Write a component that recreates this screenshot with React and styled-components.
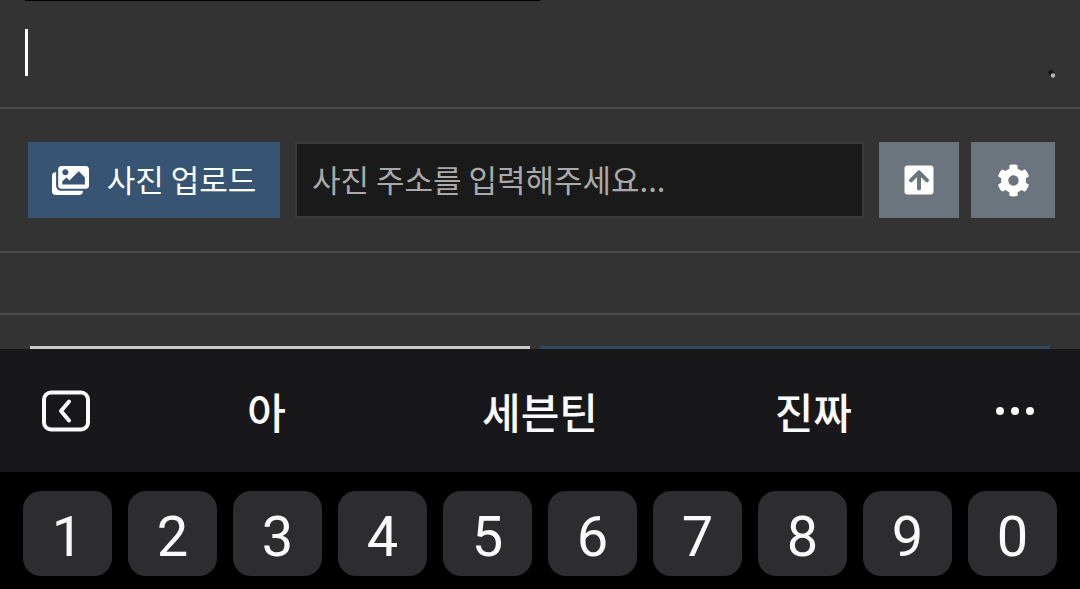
import styled, { createGlobalStyle } from 'styled-components';
import { useState } from 'react';
import { FaImages, FaCog } from 'react-icons/fa';

const suggestions = ['아', '세븐틴', '진짜'];
const digits = ['1', '2', '3', '4', '5', '6', '7', '8', '9', '0'];

function App() {
    const [content, setContent] = useState('');
    const [address, setAddress] = useState('');

    const typeDigit = (digit) => () => {
        setContent(content + digit);
    };

    return (<>
        <GlobalStyle />
        <Page>
            <Editor>
                <EditorEdge />
                <EditorText
                    aria-label="본문"
                    value={content}
                    onChange={(e) => setContent(e.target.value)}
                />
                {content === '' && <Caret />}
                <ResizeGrip viewBox="0 0 8 8" aria-hidden="true">
                    <circle cx="3" cy="2.6" r="2.5" fill="#141414" />
                    <circle cx="5" cy="5.5" r="2.2" fill="#b4b4b4" />
                </ResizeGrip>
            </Editor>

            <Toolbar>
                <UploadButton type="button">
                    <FaImages />
                    <span>사진 업로드</span>
                </UploadButton>
                <AddressInput
                    type="text"
                    aria-label="사진 주소"
                    placeholder="사진 주소를 입력해주세요..."
                    value={address}
                    onChange={(e) => setAddress(e.target.value)}
                />
                <IconButtons>
                    <IconButton type="button" $width={80} aria-label="올리기">
                        <svg width="30" height="30" viewBox="0 0 30 30" fill="none">
                            <rect x="0.5" y="0.5" width="29" height="29" rx="3" fill="#fff" />
                            <path d="M15 23.6V8M7 15.4L15 7.4L23 15.4" stroke="#6c757d" strokeWidth="4" strokeLinecap="round" strokeLinejoin="round" />
                        </svg>
                    </IconButton>
                    <IconButton type="button" $width={84} aria-label="설정">
                        <FaCog />
                    </IconButton>
                </IconButtons>
            </Toolbar>

            <Spacer />

            <Actions>
                <ActionCell $left={30} $right={10}>
                    <ActionButton type="button" $color="#c9c9c9" aria-label="취소" />
                </ActionCell>
                <ActionCell $left={0} $right={30}>
                    <ActionButton type="button" $color="#34495e" aria-label="등록" />
                </ActionCell>
            </Actions>

            <Keyboard>
                <SuggestionBar>
                    <SuggestionButton type="button" aria-label="접기">
                        <svg width="50" height="42" viewBox="0 0 50 42" fill="none" stroke="#fafafc" strokeLinecap="round" strokeLinejoin="round">
                            <rect x="4" y="2.5" width="44" height="37" rx="7" strokeWidth="4" />
                            <path d="M29 11.5L21 21L29 30.5" strokeWidth="4" />
                        </svg>
                    </SuggestionButton>
                    {suggestions.map((word) => (
                        <SuggestionButton type="button" key={word}>{word}</SuggestionButton>
                    ))}
                    <SuggestionButton type="button" aria-label="더보기">
                        <svg width="40" height="8" viewBox="0 0 40 8" fill="#fafafc">
                            <circle cx="5" cy="4" r="4" />
                            <circle cx="20" cy="4" r="4" />
                            <circle cx="35" cy="4" r="4" />
                        </svg>
                    </SuggestionButton>
                </SuggestionBar>
                <KeyRow>
                    {digits.map((digit) => (
                        <Key type="button" key={digit} onClick={typeDigit(digit)}>{digit}</Key>
                    ))}
                </KeyRow>
            </Keyboard>
        </Page>
    </>)
}

const GlobalStyle = createGlobalStyle`
* {
    box-sizing: border-box;
}

body {
    margin: 0;
    background: #333333;
}
`;

const Page = styled.div`
    display: flex;
    flex-direction: column;

    height: 100vh;
    overflow: hidden;

    background: #333333;

    button, input, textarea {
        margin: 0;
        outline: none;
    }
`;

const Editor = styled.div`
    position: relative;
    flex: none;

    padding: 0 25px;

    border-bottom: 2px solid #4b4b4b;
`;

const EditorEdge = styled.div`
    width: 50%;
    height: 1px;

    background: #000000;
`;

const EditorText = styled.textarea`
    display: block;

    width: 100%;
    height: 106px;
    padding: 28px 0 0;
    border: none;

    background: transparent;
    color: white;
    resize: none;

    font-family: "Noto Sans CJK KR", sans-serif;
    font-size: 31px;
    line-height: 48px;
`;

const Caret = styled.span`
    position: absolute;
    top: 29px;
    left: 25px;

    width: 3px;
    height: 47px;

    background: white;
    pointer-events: none;
`;

const ResizeGrip = styled.svg`
    position: absolute;
    right: 24px;
    bottom: 29px;

    width: 8px;
    height: 8px;
`;

const Toolbar = styled.div`
    display: flex;
    flex: none;
    gap: 15px;

    padding: 33px 25px 33px 28px;

    border-bottom: 2px solid #4b4b4b;
`;

const UploadButton = styled.button`
    display: flex;
    align-items: center;
    justify-content: center;
    gap: 18px;

    width: 252px;
    height: 76px;
    padding: 0;
    border: none;

    background: #375472;
    color: white;

    font-family: "Noto Sans CJK KR", sans-serif;
    font-size: 31px;
    white-space: nowrap;

    svg {
        width: 37px;
        height: 33px;
    }

    span {
        padding-bottom: 4px;
    }
`;

const AddressInput = styled.input`
    flex: 1;
    min-width: 0;
    height: 76px;
    padding: 0 15px 4px;

    border: 2px solid #3a3a3a;
    border-radius: 0;

    background: #1a1a1a;
    color: white;

    font-family: "Noto Sans CJK KR", sans-serif;
    font-size: 31px;

    &::placeholder {
        color: #aaaaaa;
        opacity: 1;
    }
`;

const IconButtons = styled.div`
    display: flex;
    gap: 12px;
`;

const IconButton = styled.button`
    display: flex;
    align-items: center;
    justify-content: center;

    width: ${(props) => props.$width}px;
    height: 76px;
    padding: 0;
    border: none;

    background: #6c757d;
    color: white;

    font-size: 33px;
`;

const Spacer = styled.div`
    flex: none;
    height: 62px;

    border-bottom: 2px solid #4b4b4b;
`;

/* runs on under the keyboard, only the top of the buttons shows */
const Actions = styled.div`
    display: grid;
    grid-template-columns: 1fr 1fr;
    flex: 1;

    min-height: 0;
    padding-top: 31px;
    overflow: hidden;
`;

const ActionCell = styled.div`
    padding-left: ${(props) => props.$left}px;
    padding-right: ${(props) => props.$right}px;
`;

const ActionButton = styled.button`
    display: block;

    width: 100%;
    height: 76px;
    border: none;

    background: ${(props) => props.$color};
`;

const Keyboard = styled.div`
    flex: none;
    background: #000000;
`;

const SuggestionBar = styled.div`
    display: grid;
    grid-template-columns: 130px repeat(3, 1fr) 130px;

    height: 123px;

    background: #18181a;
`;

const SuggestionButton = styled.button`
    display: flex;
    align-items: center;
    justify-content: center;

    padding: 0;
    border: none;

    background: transparent;
    color: #fafafc;

    font-family: "Noto Sans CJK KR", sans-serif;
    font-size: 42px;
    font-weight: 500;
`;

const KeyRow = styled.div`
    display: grid;
    grid-template-columns: repeat(10, 1fr);
    gap: 16px;

    padding: 19px 23px 13px;
`;

const Key = styled.button`
    height: 85px;
    padding: 6px 0 0;
    border: none;
    border-radius: 18px;

    background: #2d2d2f;
    color: #fafafc;

    font-family: Roboto, sans-serif;
    font-size: 56px;
`;

export default App
